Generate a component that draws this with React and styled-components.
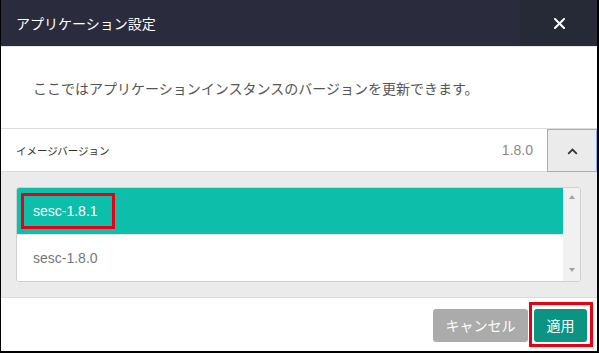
import React from "react";
import styled, { createGlobalStyle } from "styled-components";

const GlobalStyle = createGlobalStyle`
  html, body { margin: 0; padding: 0; background: #fff; }
  body { font-family: "Liberation Sans", "Noto Sans CJK JP", Arial, sans-serif; }
  * { box-sizing: border-box; }
`;

const jp = `"Liberation Sans", "Noto Sans CJK JP", sans-serif`;

const Frame = styled.div`
  width: 599px;
  height: 353px;
  border-left: 1px solid #000;
  border-right: 2px solid #000;
  border-bottom: 2px solid #000;
  display: flex;
  flex-direction: column;
  background: #fff;
  overflow: hidden;
`;

const Header = styled.div`
  height: 47px;
  flex: none;
  display: flex;
  background: #2a2c3e;
  border-bottom: 1px solid #e6e6e6;
`;

const Title = styled.div`
  flex: 1;
  display: flex;
  align-items: center;
  padding-left: 15px;
  color: #fff;
  font-family: ${jp};
  font-size: 14px;
`;

const CloseButton = styled.div`
  width: 77px;
  background: #262a36;
  display: flex;
  align-items: center;
  justify-content: center;
  padding-left: 1px;
`;

const Description = styled.div`
  height: 82px;
  flex: none;
  display: flex;
  align-items: center;
  padding: 1px 0 0 32px;
  border-bottom: 1px solid #dcdcdc;
  color: #555;
  font-family: ${jp};
  font-size: 14px;
`;

const VersionRow = styled.div`
  height: 43px;
  flex: none;
  display: flex;
  align-items: stretch;
  border-bottom: 1px solid #d8d8d8;
`;

const VersionLabel = styled.div`
  flex: 1;
  display: flex;
  align-items: center;
  padding-left: 15px;
  color: #333;
  font-family: ${jp};
  font-size: 10.5px;
`;

const VersionValue = styled.div`
  display: flex;
  align-items: center;
  padding-right: 14px;
  color: #888;
  font-size: 14px;
`;

const Toggle = styled.div`
  width: 50px;
  margin-bottom: -1px;
  border: 1px solid #8cb1ee;
  background: #ebebeb;
  display: flex;
  align-items: center;
  justify-content: center;
  padding-top: 1px;
`;

const GrayArea = styled.div`
  height: 126px;
  flex: none;
  padding: 15px 16px 15px 15px;
  background: #ebebeb;
  border-bottom: 1px solid #dcdcdc;
`;

const ListBox = styled.div`
  height: 95px;
  border: 1px solid #cfcfcf;
  border-radius: 3px;
  background: #fff;
  display: flex;
  overflow: hidden;
`;

const Items = styled.div`
  flex: 1;
  display: flex;
  flex-direction: column;
`;

const Item = styled.div`
  position: relative;
  height: ${(p) => (p.$last ? "46px" : "47px")};
  display: flex;
  align-items: center;
  padding-left: 16px;
  font-size: 14px;
  background: ${(p) => (p.$selected ? "#0dbfaa" : "#fff")};
  color: ${(p) => (p.$selected ? "#fff" : "#777")};
  border-bottom: ${(p) => (p.$last ? "none" : "1px solid #e2e2e2")};
`;

const RedMark = styled.div`
  position: absolute;
  left: 4px;
  top: 5px;
  width: 94px;
  height: 36px;
  border: 3px solid #e60012;
  pointer-events: none;
`;

const Scrollbar = styled.div`
  width: 17px;
  background: #f1f1f1;
  display: flex;
  flex-direction: column;
  justify-content: space-between;
  align-items: center;
  padding: 7px 0 9px;
`;

const Arrow = styled.div`
  width: 0;
  height: 0;
  border-left: 3.5px solid transparent;
  border-right: 3.5px solid transparent;
  ${(p) =>
    p.$down
      ? "border-top: 4px solid #a3a3a3;"
      : "border-bottom: 4px solid #a3a3a3;"}
`;

const Footer = styled.div`
  flex: 1;
  display: flex;
  justify-content: flex-end;
  align-items: flex-start;
  gap: 6px;
  padding: 11px 10px 0 0;
`;

const Button = styled.div`
  position: relative;
  height: 33px;
  padding: 0 12.5px 2px;
  border-radius: 3px;
  display: flex;
  align-items: center;
  color: #fff;
  font-family: ${jp};
  font-size: 14px;
  background: ${(p) => (p.$primary ? "#0c9483" : "#ababab")};
  ${(p) =>
    p.$marked
      ? `&::after {
          content: "";
          position: absolute;
          left: -5px;
          right: -6px;
          top: -7px;
          bottom: -5px;
          border: 3px solid #e60012;
        }`
      : ""}
`;

export default function App() {
  return (
    <>
      <GlobalStyle />
      <Frame>
        <Header>
          <Title>アプリケーション設定</Title>
          <CloseButton>
            <svg width="11" height="11" viewBox="0 0 11 11">
              <path d="M1 1 L10 10 M10 1 L1 10" stroke="#fff" strokeWidth="2" strokeLinecap="square" />
            </svg>
          </CloseButton>
        </Header>
        <Description>ここではアプリケーションインスタンスのバージョンを更新できます。</Description>
        <VersionRow>
          <VersionLabel>イメージバージョン</VersionLabel>
          <VersionValue>1.8.0</VersionValue>
          <Toggle>
            <svg width="11" height="7" viewBox="0 0 11 7">
              <path d="M1.2 5.8 L5.5 1.6 L9.8 5.8" fill="none" stroke="#333" strokeWidth="1.8" />
            </svg>
          </Toggle>
        </VersionRow>
        <GrayArea>
          <ListBox>
            <Items>
              <Item $selected>
                sesc-1.8.1
                <RedMark />
              </Item>
              <Item $last>sesc-1.8.0</Item>
            </Items>
            <Scrollbar>
              <Arrow />
              <Arrow $down />
            </Scrollbar>
          </ListBox>
        </GrayArea>
        <Footer>
          <Button>キャンセル</Button>
          <Button $primary $marked>適用</Button>
        </Footer>
      </Frame>
    </>
  );
}
